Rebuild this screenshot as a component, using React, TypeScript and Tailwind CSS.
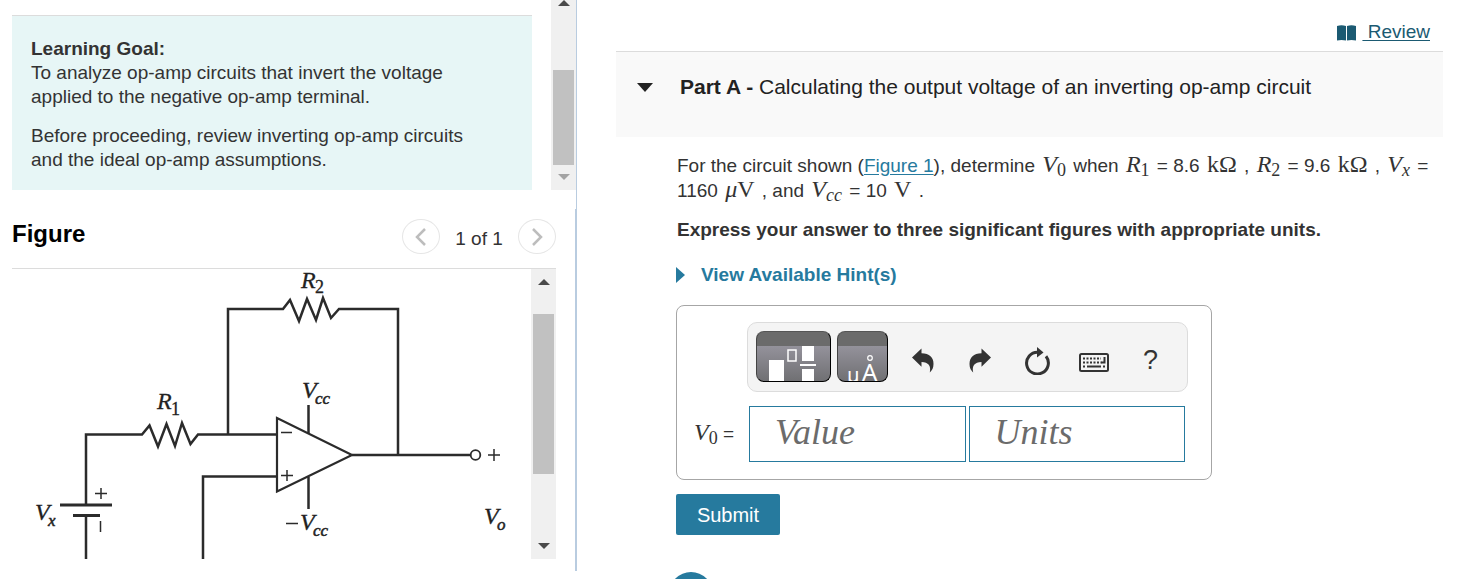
import { ReactNode } from 'react'

function Sym({ name, sub, italicSub }: { name: string; sub: string; italicSub?: boolean }) {
  return (
    <span className="whitespace-nowrap font-['Liberation_Serif',serif] text-2xl leading-0">
      <i>{name}</i>
      <span className={`relative top-1 text-lg leading-0 ${italicSub ? 'italic' : ''}`}>{sub}</span>
    </span>
  )
}

function Unit({ children }: { children: ReactNode }) {
  return <span className="font-['Liberation_Serif',serif] text-2xl leading-0">{children}</span>
}

function Arrow({ down, muted }: { down?: boolean; muted?: boolean }) {
  return (
    <svg viewBox="0 0 12 6" className={`h-[6px] w-3 ${muted ? 'fill-[#a3a3a3]' : 'fill-[#4a4a4a]'}`} aria-hidden="true">
      <path d={down ? 'M0 0h12L6 6z' : 'M6 0l6 6H0z'} />
    </svg>
  )
}

function Fraction() {
  return (
    <svg viewBox="0 0 73 49" className="block h-full w-full" aria-hidden="true">
      <path fill="#fff" d="M12 28h15v21H12zM45 14h12v15H45zM43 32h16v2H43zM45 37h12v12H45z" />
      <path fill="none" stroke="#fff" strokeWidth="1.5" d="M31 18h8v11h-8z" />
    </svg>
  )
}

function UnitSymbols() {
  return (
    <svg viewBox="0 0 49 49" className="block h-full w-full" fill="#fff" aria-hidden="true">
      <text x="9" y="50" fontSize="20" fontFamily="'Noto Sans', sans-serif">µ</text>
      <text x="24" y="49" fontSize="24" fontFamily="'Noto Sans', sans-serif">A</text>
      <circle cx="32" cy="26" r="2.3" fill="none" stroke="#fff" strokeWidth="1.2" />
    </svg>
  )
}

function UndoIcon({ flip }: { flip?: boolean }) {
  return (
    <svg viewBox="0 0 22 25" className={`h-[25px] w-[22px] ${flip ? '-scale-x-100' : ''}`} fill="#333" aria-hidden="true">
      <path d="M0 9.5L9.5 0.5v4.8c8 0.3 12 4 12 10.700c0 3.800-1.400 6.500-3.700 8.500c1.400-6.500-1.300-10.200-8.300-10.400v4.700z" />
    </svg>
  )
}

function ResetIcon() {
  return (
    <svg viewBox="0 0 26 28" className="h-7 w-[26px]" aria-hidden="true">
      <path d="M14 5.200A10.900 10.900 0 1 0 22 9.300" fill="none" stroke="#333" strokeWidth="3" />
      <path d="M13 0l6.500 5.500L13 10.500z" fill="#333" />
    </svg>
  )
}

function KeyboardIcon() {
  return (
    <svg viewBox="0 0 30 19" className="h-[19px] w-[30px]" fill="none" stroke="#333" aria-hidden="true">
      <rect x="1" y="1" width="28" height="17" rx="1.500" strokeWidth="2" />
      <path d="M4 5.500h18M4 9.500h19M4 13.500h2.500M24 13.500h2" strokeWidth="2" strokeDasharray="2 1.500" />
      <path d="M8 13.500h14M25.500 4v6M22.500 9.500h4" strokeWidth="2" />
    </svg>
  )
}

function Circuit() {
  return (
    <svg
      viewBox="12 269 519 290"
      className="block h-[290px] min-w-0 flex-1 overflow-visible"
      role="img"
      aria-label="Inverting op-amp circuit"
    >
      <g fill="none" stroke="#2b2b2b" strokeWidth="2.500">
        <path d="M228 434V309H283L290 300L299 321L307 299L316 320L323 298L331 318L339 309H398V455" />
        <path d="M86 505V434.500H142L149.500 425.500L158 446.500L166.500 424L175 446L182 423L190.500 444L198 434.500H277" />
        <path d="M277 476.500H203V559M86 515V559M308.500 405V433M308.500 477V509M352 455H470" />
        <path d="M277 418V491.500L352 455Z" strokeWidth="2.200" />
        <path d="M60 505H112M73 515.500H100" strokeWidth="3" />
        <circle cx="475.500" cy="455" r="4.800" strokeWidth="1.800" />
        <path
          d="M281 432.500H292M281 475.500H293M287 470V481M95 493.500H107M101 488V499M100.500 521V532M488 455H500M494 449V461M286 523.500H298"
          strokeWidth="1.500"
        />
      </g>
      <g fill="#222" stroke="#222" strokeWidth="0.300" fontFamily="'Liberation Serif', serif" fontSize="24" fontStyle="italic">
        <text x="301" y="288">R</text>
        <text x="157" y="409">R</text>
        <text x="302" y="398">V</text>
        <text x="300" y="530">V</text>
        <text x="484" y="524">V</text>
        <text x="35" y="520">V</text>
        <g fontSize="17" strokeWidth="0.500">
          <text x="315" y="404">cc</text>
          <text x="313" y="536">cc</text>
          <text x="497" y="530">o</text>
          <text x="48" y="526">x</text>
        </g>
        <g fontSize="18" fontStyle="normal">
          <text x="315" y="293">2</text>
          <text x="171" y="415">1</text>
        </g>
      </g>
    </svg>
  )
}

const toolButton = 'flex h-[51px] w-[57px] items-center justify-center'
const paletteButton =
  'shrink-0 overflow-hidden rounded-lg border border-t-[#555] border-l-[#444] border-r-black border-b-black bg-[linear-gradient(#6b6b6b_0,#6b6b6b_14px,#94929b_14px,#707073_100%)]'
const answerInput =
  "h-14 min-w-0 flex-1 border border-[#267a9e] bg-white px-[25px] pb-1 font-['Liberation_Serif',serif] text-4xl text-[#333] italic outline-none placeholder:text-[#6b6b6b]"
const pagerButton = 'flex h-[35px] w-[38px] items-center justify-center rounded-[50%] border border-[#e6e6e6]'

function LeftPane() {
  return (
    <aside className="flex h-[571px] min-w-0 flex-col">
      <div className="flex h-[190px] shrink-0 border-r border-[#b9cce0]">
        <div className="min-w-0 flex-1 pt-[15px] pr-[19px] pl-3">
          <section className="h-[175px] border-t border-[#dcdcdc] bg-[#e7f6f6] pt-[21px] pr-12 pl-[19px] leading-6">
            <h2 className="font-bold">Learning Goal:</h2>
            <p>To analyze op-amp circuits that invert the voltage applied to the negative op-amp terminal.</p>
            <p className="mt-[15px]">Before proceeding, review inverting op-amp circuits and the ideal op-amp assumptions.</p>
          </section>
        </div>
        <div className="flex w-[25px] flex-col items-center bg-[#f0f0f0] pb-[10px]">
          <Arrow />
          <div className="mt-16 mb-[9px] w-[21px] flex-1 bg-[#c1c1c1]" />
          <Arrow down muted />
        </div>
      </div>
      <div className="h-[19px] shrink-0 border-r border-[#b9cce0]" />
      <div className="min-h-0 flex-1 border-r-2 border-[#b9cce0] pr-[19px] pl-3">
        <header className="flex h-[60px] items-center border-b border-[#dcdcdc] pb-1">
          <h2 className="flex-1 pb-[6px] text-2xl font-bold text-black">Figure</h2>
          <button type="button" className={pagerButton} aria-label="Previous figure">
            <svg viewBox="0 0 12 18" className="h-[18px] w-3" fill="none" stroke="#bdbdbd" strokeWidth="2.500">
              <path d="M10 1L2 9l8 8" />
            </svg>
          </button>
          <span className="w-[78px] pt-[6px] text-center">1 of 1</span>
          <button type="button" className={pagerButton} aria-label="Next figure">
            <svg viewBox="0 0 12 18" className="h-[18px] w-3" fill="none" stroke="#bdbdbd" strokeWidth="2.500">
              <path d="M2 1l8 8-8 8" />
            </svg>
          </button>
        </header>
        <div className="flex">
          <Circuit />
          <div className="flex w-[25px] flex-col items-center bg-[#f0f0f0] py-[10px]">
            <Arrow />
            <div className="mt-[29px] h-40 w-[21px] bg-[#c1c1c1]" />
            <div className="flex-1" />
            <Arrow down />
          </div>
        </div>
      </div>
    </aside>
  )
}

function AnswerBox() {
  return (
    <div className="flex h-[175px] w-[536px] flex-col rounded-lg border border-[#a6a6a6] pt-4 pr-[23px] pl-[17px]">
      <div className="ml-[53px] flex h-[70px] items-start gap-[6px] rounded-[10px] border border-[#dcdcdc] bg-[#f4f4f4] px-2 pt-2">
        <button type="button" className={`h-[51px] w-[75px] ${paletteButton}`} aria-label="Templates">
          <Fraction />
        </button>
        <button type="button" className={`h-[51px] w-[51px] ${paletteButton}`} aria-label="Symbols">
          <UnitSymbols />
        </button>
        <div className="flex pt-1">
          <button type="button" className={toolButton} aria-label="Undo"><UndoIcon /></button>
          <button type="button" className={toolButton} aria-label="Redo"><UndoIcon flip /></button>
          <button type="button" className={toolButton} aria-label="Reset"><ResetIcon /></button>
          <button type="button" className={`pt-1 ${toolButton}`} aria-label="Keyboard shortcuts"><KeyboardIcon /></button>
          <button type="button" className={`text-[27px] ${toolButton}`} aria-label="Help">?</button>
        </div>
      </div>
      <div className="mt-[14px] flex items-center">
        <label htmlFor="value" className="w-[55px] shrink-0 whitespace-nowrap">
          <Sym name="V" sub="0" /> =
        </label>
        <div className="flex min-w-0 flex-1 gap-[3px] pr-[3px]">
          <input id="value" className={answerInput} placeholder="Value" />
          <input className={answerInput} placeholder="Units" aria-label="Units" />
        </div>
      </div>
    </div>
  )
}

function RightPane() {
  return (
    <main className="min-w-0 pr-[25px] pl-[39px]">
      <div className="flex h-[51px] items-center justify-end pt-[14px] pr-[13px]">
        <a href="#review" className="flex items-center gap-[6px] text-[#1b5a72]">
          <svg viewBox="0 0 19 16" className="h-4 w-[19px]" fill="currentColor" aria-hidden="true">
            <path d="M0 1Q4.500-0.500 9 1V15.500Q4.500 14.500 0 15.500zM10 1Q14.500-0.500 19 1V15.500Q14.500 14.500 10 15.500z" />
          </svg>
          <span className="whitespace-pre underline underline-offset-2"> Review</span>
        </a>
      </div>
      <header className="flex h-[86px] border-t border-[#dcdcdc] bg-[#f9f9f9] pt-[22px] pl-[21px] text-[21px] leading-[26px] text-[#222]">
        <button type="button" className="flex h-[26px] w-[43px] items-center" aria-label="Collapse Part A">
          <svg viewBox="0 0 16 9" className="h-[9px] w-4" fill="#222"><path d="M0 0h16L8 9z" /></svg>
        </button>
        <h1><b>Part A - </b>Calculating the output voltage of an inverting op-amp circuit</h1>
      </header>
      <div className="pt-4 pl-[60px]">
        <p className="pl-px leading-[25px] [&>span]:px-0.5">
          For the circuit shown (<a href="#figure" className="text-[#267a9e] underline underline-offset-2">Figure 1</a>), determine{' '}
          <Sym name="V" sub="0" /> when <Sym name="R" sub="1" /> = 8.6 <Unit>kΩ</Unit> , <Sym name="R" sub="2" /> = 9.6 <Unit>kΩ</Unit> ,{' '}
          <Sym name="V" sub="x" italicSub /> = 1160 <Unit><i>μ</i>V</Unit> , and <Sym name="V" sub="cc" italicSub /> = 10 <Unit>V</Unit> .
        </p>
        <p className="mt-[14px] pl-px leading-[25px] font-bold">
          Express your answer to three significant figures with appropriate units.
        </p>
        <button type="button" className="mt-5 flex h-[26px] items-center gap-4 font-bold text-[#267a9e]">
          <svg viewBox="0 0 9 16" className="h-4 w-[9px]" fill="currentColor" aria-hidden="true"><path d="M0 0l9 8-9 8z" /></svg>
          View Available Hint(s)
        </button>
        <div className="mt-[17px]">
          <AnswerBox />
        </div>
        <button type="button" className="mt-[14px] h-[41px] w-[104px] rounded-xs bg-[#267a9e] text-xl text-white">Submit</button>
      </div>
      <div className="mt-[37px] ml-[53px] size-11 rounded-full bg-[#267a9e]" />
    </main>
  )
}

export default function App() {
  return (
    <div className="grid h-screen grid-cols-[minmax(0,577fr)_minmax(0,891fr)] overflow-hidden bg-white font-['Liberation_Sans',Arial,sans-serif] text-[19px] text-[#333]">
      <LeftPane />
      <RightPane />
    </div>
  )
}
